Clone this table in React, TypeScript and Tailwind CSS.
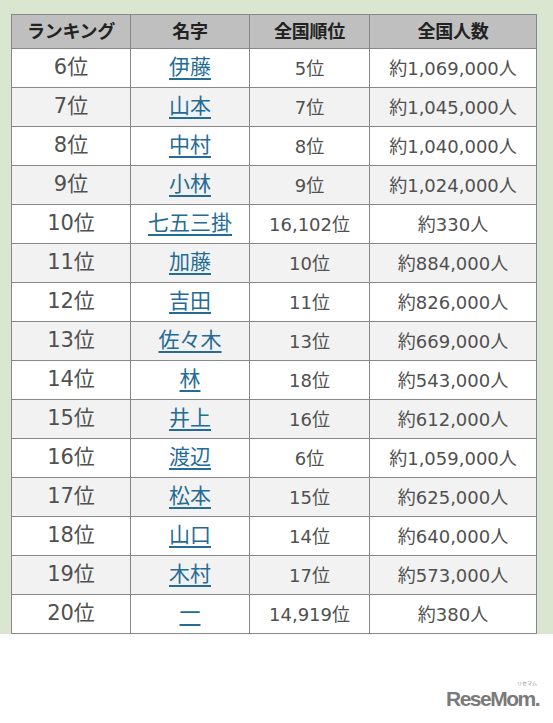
const rows = [
  ["6位", "伊藤", "5位", "約1,069,000人"],
  ["7位", "山本", "7位", "約1,045,000人"],
  ["8位", "中村", "8位", "約1,040,000人"],
  ["9位", "小林", "9位", "約1,024,000人"],
  ["10位", "七五三掛", "16,102位", "約330人"],
  ["11位", "加藤", "10位", "約884,000人"],
  ["12位", "吉田", "11位", "約826,000人"],
  ["13位", "佐々木", "13位", "約669,000人"],
  ["14位", "林", "18位", "約543,000人"],
  ["15位", "井上", "16位", "約612,000人"],
  ["16位", "渡辺", "6位", "約1,059,000人"],
  ["17位", "松本", "15位", "約625,000人"],
  ["18位", "山口", "14位", "約640,000人"],
  ["19位", "木村", "17位", "約573,000人"],
  ["20位", "一", "14,919位", "約380人"],
];

const font = { fontFamily: '"DejaVu Sans", "Noto Sans CJK JP", sans-serif' };

export default function App() {
  return (
    <div className="w-[553px] h-[723px] bg-white" style={font}>
      <div className="bg-[#dbe6d1] pt-[14px] pl-[11px] pr-[17px]">
        <table className="w-[525px] border-collapse table-fixed">
          <colgroup>
            <col className="w-[119px]" />
            <col className="w-[119px]" />
            <col className="w-[120px]" />
            <col className="w-[167px]" />
          </colgroup>
          <thead>
            <tr className="h-[34px] bg-[#bfbfbf]">
              {["ランキング", "名字", "全国順位", "全国人数"].map((h) => (
                <th key={h} className="border border-[#878787] text-[18px] font-bold text-[#222] text-center p-0 tracking-[-0.3px]">
                  {h}
                </th>
              ))}
            </tr>
          </thead>
          <tbody>
            {rows.map((r, i) => (
              <tr key={r[0]} className={`h-[39px] ${i % 2 === 1 ? "bg-[#f2f2f2]" : "bg-white"}`}>
                <td className="border border-[#878787] text-center text-[21px] text-[#505050] p-0">{r[0]}</td>
                <td className="border border-[#878787] text-center text-[21px] p-0">
                  <a href="#" className="text-[#246b96] underline underline-offset-[4px] decoration-[1.5px]">{r[1]}</a>
                </td>
                <td className="border border-[#878787] text-center text-[18px] text-[#505050] p-0">{r[2]}</td>
                <td className="border border-[#878787] text-center text-[18px] text-[#505050] p-0">{r[3]}</td>
              </tr>
            ))}
          </tbody>
        </table>
      </div>
      <div className="flex justify-end pr-[14px] pt-[54px]">
        <div className="relative">
          <span className="absolute right-[2px] top-[-8px] text-[5px] leading-none text-[#8a8a8a]" style={{ fontFamily: '"Noto Sans CJK JP", sans-serif' }}>
            リセマム
          </span>
          <span className="block text-[21px] font-bold text-[#7a7a7a] tracking-[-1.5px] leading-none" style={{ fontFamily: '"Liberation Sans", Arial, sans-serif' }}>
            ReseMom.
          </span>
        </div>
      </div>
    </div>
  );
}
